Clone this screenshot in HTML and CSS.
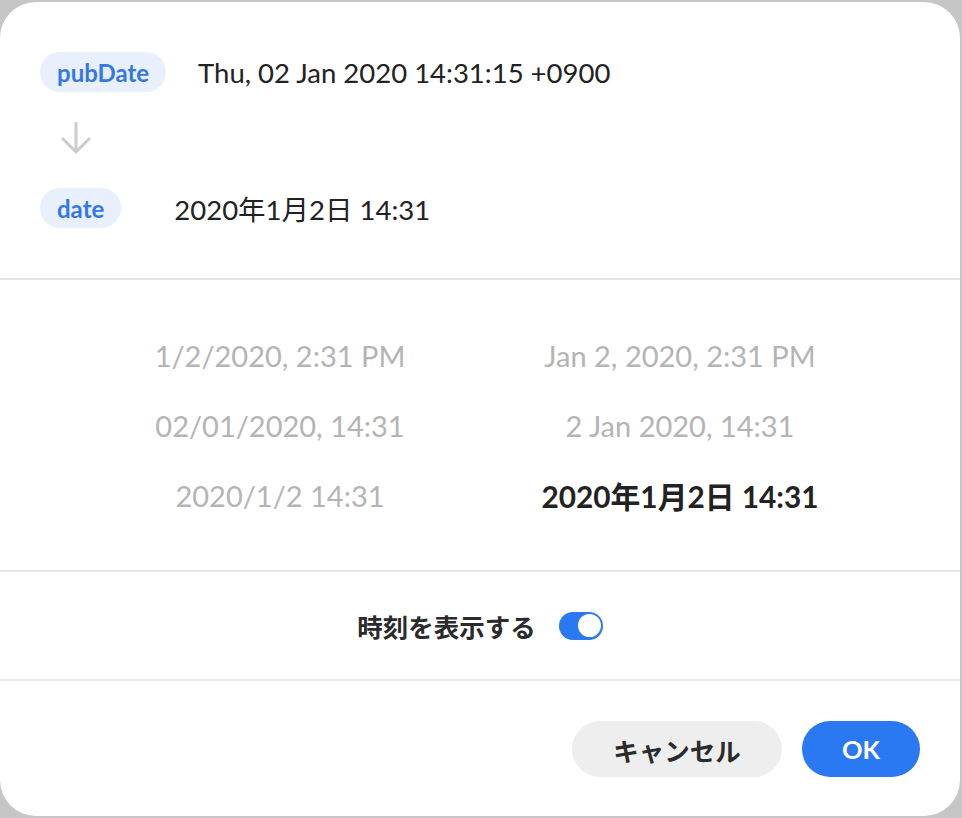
FILE: index.html
```html
<!DOCTYPE html>
<html lang="ja">
<head>
    <meta charset="UTF-8">
    <meta name="viewport" content="width=device-width, initial-scale=1.0">
    <title>日付フォーマット</title>
    <link rel="stylesheet" href="styles.css">
</head>
<body>
    <div class="dialog">
        <div class="source">
            <div class="field-row">
                <span class="pill">pubDate</span>
                <span class="field-value value-pub">Thu, 02 Jan 2020 14:31:15 +0900</span>
            </div>
            <div class="arrow">
                <svg width="34" height="34" viewBox="0 0 34 34" fill="none" stroke="#cccccc" stroke-width="3">
                    <path d="M16 0 V30"/>
                    <path d="M2 16 L16 30 L30 16"/>
                </svg>
            </div>
            <div class="field-row">
                <span class="pill">date</span>
                <span class="field-value value-date">2020年1月2日 14:31</span>
            </div>
        </div>
        <div class="formats">
            <div class="format">1/2/2020, 2:31 PM</div>
            <div class="format">Jan 2, 2020, 2:31 PM</div>
            <div class="format">02/01/2020, 14:31</div>
            <div class="format">2 Jan 2020, 14:31</div>
            <div class="format">2020/1/2 14:31</div>
            <div class="format selected">2020年1月2日 14:31</div>
        </div>
        <div class="time-option">
            <span class="time-label">時刻を表示する</span>
            <span class="toggle on"><span class="knob"></span></span>
        </div>
        <div class="footer">
            <button class="btn cancel">キャンセル</button>
            <button class="btn ok">OK</button>
        </div>
    </div>
</body>
</html>
```

FILE: styles.css
```css
body {
    background: #c6c6c6;
    margin: 0;
    padding: 2px 2px 2px 0;
    font-family: Lato, "Noto Sans CJK JP", sans-serif;
    color: #222;
}
.dialog {
    width: 960px;
    height: 814px;
    background: #fff;
    border-radius: 36px;
    display: flex;
    flex-direction: column;
    overflow: hidden;
}
.source {
    padding: 50px 40px 50px 40px;
}
.field-row {
    display: flex;
    align-items: center;
    height: 40px;
}
.pill {
    display: inline-flex;
    align-items: center;
    height: 40px;
    padding: 0 17px;
    border-radius: 20px;
    background: #e8f0fd;
    color: #3577e4;
    font-size: 24px;
    font-weight: bold;
}
.field-value {
    font-size: 27.5px;
    color: #222;
}
.value-pub {
    margin-left: 32px;
}
.value-date {
    margin-left: 53px;
}
.arrow {
    height: 34px;
    margin: 30px 0 32px 20px;
}
.arrow svg {
    display: block;
}
.formats {
    border-top: 2px solid #e6e6e6;
    padding: 40px 80px 40px 80px;
    display: grid;
    grid-template-columns: 1fr 1fr;
    grid-auto-rows: 70px;
}
.format {
    display: flex;
    align-items: center;
    justify-content: center;
    font-size: 29px;
    color: #b4b4b4;
}
.format.selected {
    color: #222;
    font-weight: bold;
    font-size: 29.8px;
}
.time-option {
    border-top: 2px solid #e6e6e6;
    height: 107px;
    display: flex;
    align-items: center;
    justify-content: center;
    gap: 23px;
}
.time-label {
    font-size: 25.5px;
    font-weight: bold;
    color: #2b2b2b;
}
.toggle {
    width: 44px;
    height: 28px;
    border-radius: 14px;
    background: #ddd;
    display: flex;
    align-items: center;
    padding: 0 2px;
    box-sizing: border-box;
}
.toggle.on {
    background: #2a78f2;
    justify-content: flex-end;
}
.knob {
    width: 23px;
    height: 23px;
    border-radius: 50%;
    background: #fff;
}
.footer {
    border-top: 2px solid #e6e6e6;
    flex: 1;
    display: flex;
    justify-content: flex-end;
    align-items: flex-start;
    gap: 20px;
    padding: 40px 40px 0 0;
}
.btn {
    height: 56px;
    border: none;
    border-radius: 28px;
    font-family: Lato, "Noto Sans CJK JP", sans-serif;
    font-size: 25.5px;
    font-weight: bold;
    cursor: pointer;
}
.btn.cancel {
    width: 210px;
    background: #eeeeee;
    color: #2b2b2b;
}
.btn.ok {
    width: 118px;
    background: #2a78f2;
    color: #fff;
}
```
